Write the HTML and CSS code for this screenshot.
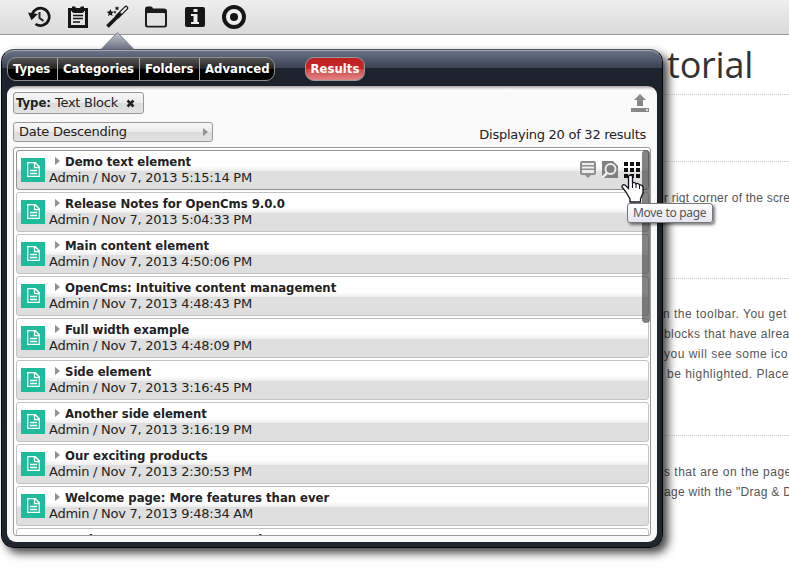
FILE: index.html
```html
<!DOCTYPE html>
<html lang="en">
<head>
<meta charset="utf-8">
<title>Results</title>
<link rel="stylesheet" href="styles.css">
</head>
<body>
<svg class="defs" aria-hidden="true">
  <symbol id="doc" viewBox="0 0 24 24"><rect width="24" height="24" fill="#1ebc9c"/><path d="M6.700 4.700h7.600l4 4v9.600H6.700zM13.500 5v4.500h4.500M9 12.500h7M9 15.500h7" fill="none" stroke="#fff" stroke-width="1.300"/></symbol>
</svg>
<header class="toolbar">
  <svg viewBox="0 0 24 24"><path d="M4.800 12A8.700 8.700 0 1 1 8.500 19" fill="none" stroke="#161616" stroke-width="2.700"/><path d="M1 7.500l10 1.500-6.500 6.300z" fill="#161616"/><path d="M12.500 7v6l4 3" fill="none" stroke="#222" stroke-width="2"/></svg>
  <svg viewBox="0 0 24 24"><path d="M3.500 4.500h17v17h-17z" fill="#e4e4e4" stroke="#161616" stroke-width="3"/><path d="M6 1.500h3l1.500 2h3l1.500-2h3V7l-2 1H8L6 7z" fill="#161616"/><path d="M7 10.500h10M7 13.500h10M7 17h7" stroke="#161616" stroke-width="1.500"/></svg>
  <svg viewBox="0 0 24 24"><path d="M2.500 21.500L15 9" stroke="#161616" stroke-width="3.800"/><path d="M12.500 11.500L21 3" stroke="#161616" stroke-width="4.500" stroke-linecap="round"/><path d="M16.500 7.500L21 3" stroke="#eee" stroke-width="2" stroke-linecap="round"/><path d="M5.300 4l1.100 2.500 2.600.2-2 1.800.6 2.600-2.300-1.400L3 11l.7-2.500-2-1.800 2.500-.2zM12 1l.7 1.500 1.600.1-1.200 1.100.3 1.600L12 4.500l-1.400.8.3-1.600-1.200-1.100 1.600-.1zM10 5.500l.5 1 1 .2-.8.7.2 1-.9-.5-.9.5.2-1-.8-.7 1-.2z" fill="#161616"/></svg>
  <svg viewBox="0 0 24 24"><path d="M1 4Q1 1.500 3 1.500h4q1.500 0 2 2h11q3 0 3 2.500v14q0 2.500-2.500 2.500h-17Q1 22.500 1 20z" fill="#1c1c1c"/><rect x="3" y="8" width="18" height="12.800" rx="1" fill="#e2e2e2"/></svg>
  <svg viewBox="0 0 24 24"><rect x="2" y="2" width="20" height="20" rx="2" fill="#161616"/><path d="M10.500 4h4v3h-4zM8 9h6.500v8H16v2H8v-2h2.500v-6H8z" fill="#eee"/></svg>
  <svg viewBox="0 0 24 24"><circle cx="12" cy="12" r="10" fill="#eee" stroke="#161616" stroke-width="4"/><circle cx="12" cy="12" r="4" fill="#161616"/></svg>
</header>

<main class="page">
  <h1>torial</h1>
  <section class="s1"></section>
  <section class="s2"><p class="i1">r rigt corner of the scre</p></section>
  <section class="s3"><p class="i2">n the toolbar. You get</p><p class="i3">blocks that have alrea</p><p class="i4">you will see some ico</p><p class="i5">be highlighted. Place</p></section>
  <section class="s4"><p class="i6">s that are on the page</p><p class="i7">age with the "Drag &amp; D</p></section>
</main>

<div class="panel">
  <svg class="pointer" viewBox="0 0 36 18"><defs><linearGradient id="tip" x1="0" y1="0" x2="0" y2="1"><stop offset="0" stop-color="#c5c8d0"/><stop offset="1" stop-color="#686e82"/></linearGradient></defs><path d="M1 17.500L17.500 .7 34 17.500" fill="url(#tip)" stroke="#74777d"/></svg>
  <nav class="tabs">
    <div class="group"><span class="t1">Types</span><span class="t2">Categories</span><span class="t3">Folders</span><span class="t4">Advanced</span></div>
    <span class="active">Results</span>
  </nav>
  <div class="content">
    <div class="filters">
      <span class="chip"><b>Type:</b> Text Block <svg viewBox="0 0 9 9"><path d="M1.500 1.500l6 6m0-6l-6 6" stroke="#222" stroke-width="2.600"/></svg></span>
      <svg class="upload" viewBox="0 0 18 18"><path d="M9 0l6 6h-3v6H6V6H3zM0 14h18v4H0z" fill="#888"/><path d="M15 15h2v2h-2z" fill="#ddd"/></svg>
    </div>
    <div class="options"><span class="select">Date Descending<i class="arrow"></i></span><span class="count">Displaying 20 of 32 results</span></div>
    <div class="list">
      <article class="hover"><svg class="doc"><use href="#doc"/></svg><div><h2><i class="arrow"></i>Demo text element</h2><p>Admin / Nov 7, 2013 5:15:14 PM</p></div>
        <div class="actions">
          <svg viewBox="0 0 18 18"><path d="M3 1h12q2 0 2 2v10q0 2-2 2h-3l-3 3-3-3H3q-2 0-2-2V3q0-2 2-2z" fill="#8e8e8e"/><path d="M3 3h12v2H3zM3 6.500h12v2H3zM3 10h12v3H3z" fill="#eee"/></svg>
          <svg viewBox="0 0 18 18"><path d="M1 1h11l5 5v12H1z" fill="#808080"/><circle cx="9.500" cy="9" r="5" fill="#808080" stroke="#eee" stroke-width="2"/><path d="M6 13l-5 5" stroke="#eee" stroke-width="2.500"/></svg>
          <svg viewBox="0 0 18 18"><path d="M1 2h4v4H1zM7 2h4v4H7zM13 2h4v4h-4zM1 8h4v4H1zM7 8h4v4H7zM13 8h4v4h-4zM1 14h4v4H1zM7 14h4v4H7zM13 14h4v4h-4z" fill="#111"/></svg>
        </div></article>
      <article><svg class="doc"><use href="#doc"/></svg><div><h2><i class="arrow"></i>Release Notes for OpenCms 9.0.0</h2><p>Admin / Nov 7, 2013 5:04:33 PM</p></div></article>
      <article><svg class="doc"><use href="#doc"/></svg><div><h2><i class="arrow"></i>Main content element</h2><p>Admin / Nov 7, 2013 4:50:06 PM</p></div></article>
      <article><svg class="doc"><use href="#doc"/></svg><div><h2><i class="arrow"></i>OpenCms: Intuitive content management</h2><p>Admin / Nov 7, 2013 4:48:43 PM</p></div></article>
      <article><svg class="doc"><use href="#doc"/></svg><div><h2><i class="arrow"></i>Full width example</h2><p>Admin / Nov 7, 2013 4:48:09 PM</p></div></article>
      <article><svg class="doc"><use href="#doc"/></svg><div><h2><i class="arrow"></i>Side element</h2><p>Admin / Nov 7, 2013 3:16:45 PM</p></div></article>
      <article><svg class="doc"><use href="#doc"/></svg><div><h2><i class="arrow"></i>Another side element</h2><p>Admin / Nov 7, 2013 3:16:19 PM</p></div></article>
      <article><svg class="doc"><use href="#doc"/></svg><div><h2><i class="arrow"></i>Our exciting products</h2><p>Admin / Nov 7, 2013 2:30:53 PM</p></div></article>
      <article><svg class="doc"><use href="#doc"/></svg><div><h2><i class="arrow"></i>Welcome page: More features than ever</h2><p>Admin / Nov 7, 2013 9:48:34 AM</p></div></article>
      <article><svg class="doc"><use href="#doc"/></svg><div><h2><i class="arrow"></i>Modern pages on any screen layout</h2></div></article>
      <i class="scroll"></i>
    </div>
  </div>
</div>
<svg class="cursor" viewBox="0 0 23 29"><path d="M7.500 3q0-2 2-2t2 2v6q2-1.500 3.500 1 2-1.500 3.500 1 3-.5 3.500 2v6l-2.500 6v3H9v-3L5 18l-4-5q0-3 3-2l3.500 3.500z" fill="#fff" stroke="#10101c" stroke-width="1.300"/><path d="M11.500 9v5M15 10v4M18.500 11v4" stroke="#10101c"/></svg>
<div class="tooltip">Move to page</div>
</body>
</html>
```
FILE: styles.css
```css
* { box-sizing: border-box; }
body { margin: 0; width: 789px; height: 577px; overflow: hidden; background: #fff; color: #222; font: 13px/16px "DejaVu Sans", Verdana, sans-serif; letter-spacing: -.26px; white-space: nowrap; }
h1, h2, p { margin: 0; }
svg { display: block; flex: none; }
.defs { position: absolute; width: 0; height: 0; }
.toolbar { display: flex; gap: 15px; height: 35px; padding: 5px 0 0 27px; background: linear-gradient(#eee, #dadada); border-bottom: 1px solid #999; }
.toolbar svg { width: 24px; height: 24px; }

.page { padding-left: 664px; font: 12px/20px "Liberation Sans", Arial, sans-serif; letter-spacing: .5px; color: #555; }
.page h1 { height: 59px; padding: 5px 0 0 3px; font: 36px/50px "Open Sans", sans-serif; letter-spacing: -.2px; color: #333; }
.page section { border-top: 1px dotted #ccc; }
.s1 { height: 67px; }
.s2 { height: 117px; padding-top: 26px; }
.s3 { height: 157px; padding-top: 25px; }
.s4 { padding-top: 26px; }
.i1 { letter-spacing: .22px; }
.i2 { margin-left: -1px; }
.i3 { letter-spacing: .4px; }
.i5 { margin-left: 3px; }
.i7 { letter-spacing: .3px; }

.panel { position: absolute; left: 1px; top: 49px; width: 662px; height: 499px; padding: 0 5px 5px; border: 1px solid #05070a; border-top-color: #4d5058; border-radius: 13px; background: linear-gradient(#6c748a 0, #394153 18px, #1c232d 18px, #1c232d 40px, #20262e 100%); box-shadow: inset 0 1px #a5a9b0, 5px 5px 10px rgba(0,0,0,.75); }
.pointer { position: absolute; left: 98px; top: -18px; width: 36px; height: 18px; }
.tabs { display: flex; align-items: flex-start; height: 36px; padding-top: 7px; gap: 30px; color: #fff; font: bold 13px/22px "DejaVu Sans Condensed", "DejaVu Sans", sans-serif; font-stretch: condensed; letter-spacing: 0; }
.group { display: flex; border: 1px solid #8e8e8e; border-radius: 9px; background: linear-gradient(#555, #222 11px, #000 11px); height: 24px; }
.group span { padding-left: 5px; }
.group span + span { border-left: 1px solid #aaa; }
.t1 { width: 49px; }
.t2 { width: 82px; }
.t3 { width: 60px; }
.t4 { width: 75px; }
.active { width: 60px; height: 24px; text-align: center; border: 1px solid #999; border-radius: 9px; background: linear-gradient(#bd2020, #c92525 11px, #d34444 11px, #df8585); }

.content { height: 456px; padding: 6px; border-radius: 9px; background: linear-gradient(#aaa2a5 0, #ededed 3px, #fff 5px, #f9f9f9 7px); }
.filters { display: flex; justify-content: space-between; height: 30px; }
.chip { display: flex; align-items: center; width: 131px; height: 22px; padding-left: 2px; border: 1px solid #999; border-radius: 3px; background: linear-gradient(#f7f7f7, #eaeaea 50%, #dcdcdc 50%, #e2e2e2); white-space: pre; }
.chip b { font-family: "DejaVu Sans Condensed", "DejaVu Sans", sans-serif; font-stretch: condensed; letter-spacing: 0; }
.chip svg { width: 9px; height: 9px; margin-left: 4px; }
.upload { width: 18px; height: 18px; margin: 2px 2px 0 0; }
.options { display: flex; justify-content: space-between; height: 25px; }
.select { display: flex; align-items: center; justify-content: space-between; width: 200px; height: 20px; padding: 0 4px 0 5px; border: 1px solid #999; border-radius: 3px; background: linear-gradient(#f8f8f8, #eaeaea 50%, #dcdcdc 50%, #e2e2e2); }
.count { padding: 5px 5px 0 0; }
.arrow { display: inline-block; width: 0; height: 0; border: 4px solid transparent; border-left: 5px solid #909090; border-right: 0; }
.list { position: relative; height: 389px; padding: 2px; border: 1px solid #999; border-radius: 3px; background: #fff; overflow: hidden; }
.list article { display: flex; width: 633px; height: 40px; margin-bottom: 2px; padding: 3px 0 0 4px; border: 1px solid #c2c2c2; border-radius: 3px; background: linear-gradient(#fff 40%, #ededed 20px, #dfdfdf 20px); }
.list .hover { border-color: #929292; }
.doc { width: 24px; height: 24px; margin: 4px 4px 0 0; }
.list h2 { display: flex; font: bold 13px/16px "DejaVu Sans Condensed", "DejaVu Sans", sans-serif; font-stretch: condensed; letter-spacing: -.03px; }
.list h2 .arrow { margin: 3px 5px 0 6px; }
.actions { display: flex; gap: 4px; margin: 6px 7px 0 auto; }
.actions svg { width: 18px; height: 18px; }
.scroll { position: absolute; left: 628px; top: 2px; width: 8px; height: 173px; border-radius: 4px; background: rgba(65,65,65,.65); }
.cursor { position: absolute; left: 621px; top: 174px; width: 23px; height: 29px; }
.tooltip { position: absolute; left: 627px; top: 203px; width: 86px; height: 20px; padding-left: 5px; border: 1px solid #777; border-radius: 3px; background: linear-gradient(#fff, #e4e5f1); box-shadow: 2px 2px 3px rgba(0,0,0,.5); color: #555; font: 12px/18px "Noto Sans", sans-serif; letter-spacing: -.3px; }
```
